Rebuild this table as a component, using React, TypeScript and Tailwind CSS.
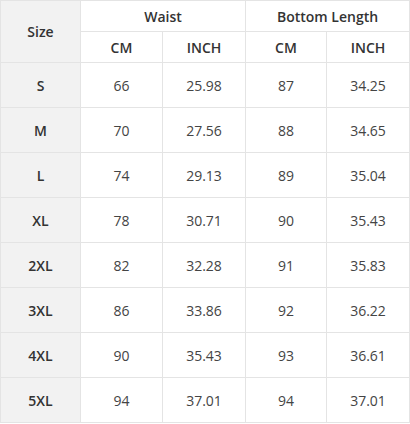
import React from "react";

const rows = [
  ["S", "66", "25.98", "87", "34.25"],
  ["M", "70", "27.56", "88", "34.65"],
  ["L", "74", "29.13", "89", "35.04"],
  ["XL", "78", "30.71", "90", "35.43"],
  ["2XL", "82", "32.28", "91", "35.83"],
  ["3XL", "86", "33.86", "92", "36.22"],
  ["4XL", "90", "35.43", "93", "36.61"],
  ["5XL", "94", "37.01", "94", "37.01"],
];

export default function App() {
  return (
    <div className="bg-white w-[410px] h-[424px]" style={{ fontFamily: '"Open Sans", "Noto Sans", sans-serif' }}>
      <table className="border-collapse table-fixed w-[409px] text-[14px] text-[#333]">
        <colgroup>
          <col className="w-[80px]" />
          <col className="w-[82px]" />
          <col className="w-[83px]" />
          <col className="w-[81px]" />
          <col className="w-[83px]" />
        </colgroup>
        <thead>
          <tr className="h-[31px]">
            <th rowSpan={2} className="border border-[#e4e4e4] bg-[#f2f2f2] font-semibold p-0">Size</th>
            <th colSpan={2} className="border border-[#e4e4e4] font-semibold p-0">Waist</th>
            <th colSpan={2} className="border border-[#e4e4e4] font-semibold p-0">Bottom Length</th>
          </tr>
          <tr className="h-[31px]">
            <th className="border border-[#e4e4e4] font-semibold p-0">CM</th>
            <th className="border border-[#e4e4e4] font-semibold p-0">INCH</th>
            <th className="border border-[#e4e4e4] font-semibold p-0">CM</th>
            <th className="border border-[#e4e4e4] font-semibold p-0">INCH</th>
          </tr>
        </thead>
        <tbody>
          {rows.map((r) => (
            <tr key={r[0]} className="h-[45px]">
              <td className="border border-[#e4e4e4] bg-[#f2f2f2] font-semibold text-center p-0">{r[0]}</td>
              {r.slice(1).map((v, i) => (
                <td key={i} className="border border-[#e4e4e4] text-center p-0 text-[#444]">{v}</td>
              ))}
            </tr>
          ))}
        </tbody>
      </table>
    </div>
  );
}
